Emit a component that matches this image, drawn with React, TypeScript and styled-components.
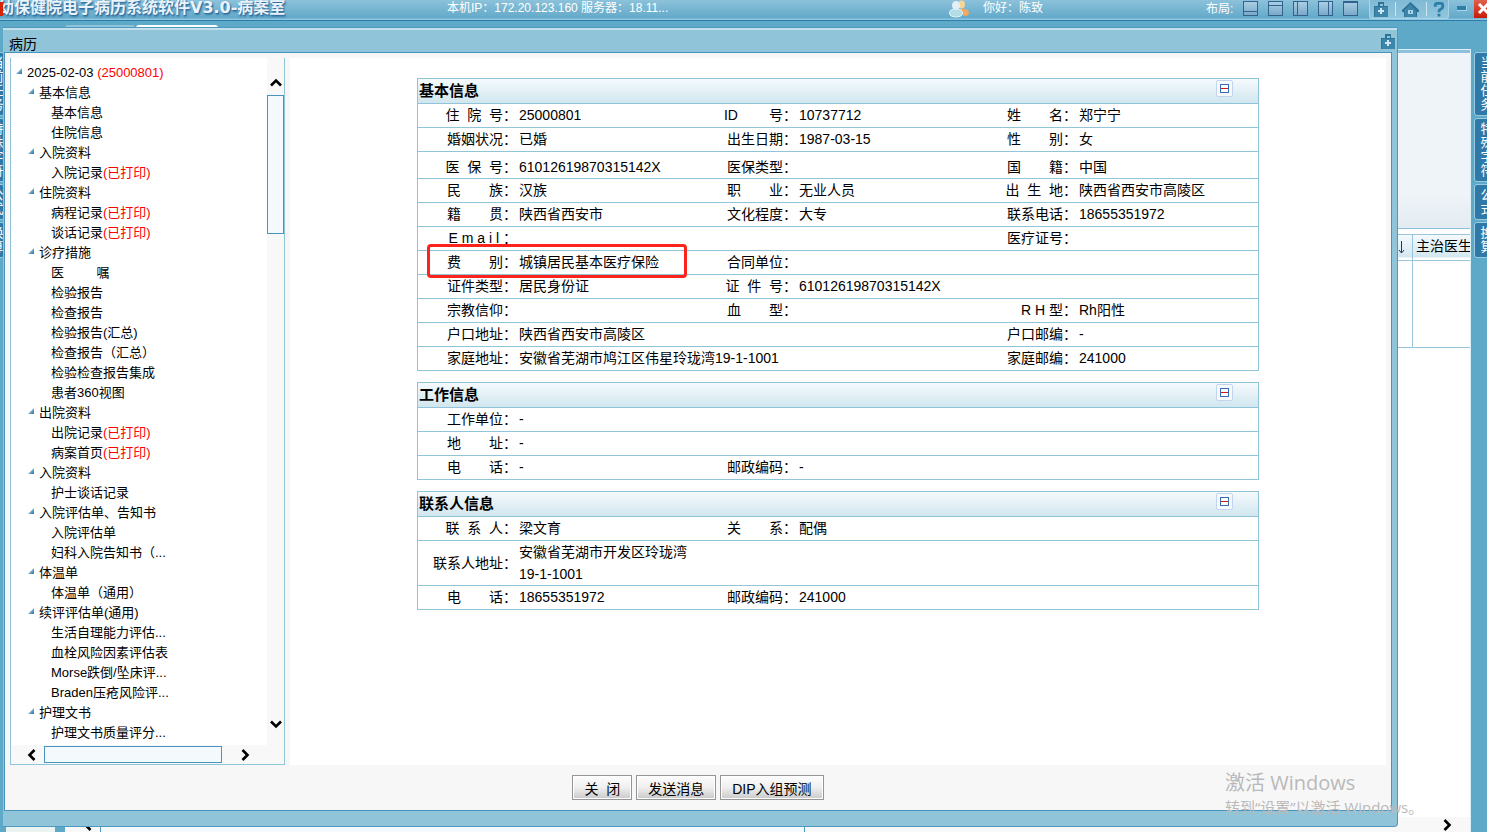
import React from "react";
import styled, { createGlobalStyle } from "styled-components";

const NB = "\u00a0";
const sp = (n: number) => NB.repeat(n);

const Global = createGlobalStyle`
  * { box-sizing: border-box; }
  html, body { margin: 0; padding: 0; overflow: hidden; }
  body, button { font-family: "Liberation Sans", "Noto Sans CJK SC", sans-serif; font-size: 14px; color: #000; }
  button { cursor: pointer; }
`;

const Desktop = styled.div`
  position: relative;
  display: flex;
  flex-direction: column;
  height: 100vh;
  overflow: hidden;
  background: #5ea8c8;
`;

/* ---------- application bar ---------- */

const TopBar = styled.header`
  position: relative;
  flex: none;
  display: flex;
  justify-content: space-between;
  height: 21px;
  border-bottom: 1px solid #2f7cab;
  background: linear-gradient(#8cc2da, #63a9c9 18px, #8cc6e0 19px);
  color: #fff;
  font-size: 12px;
  line-height: 16px;
`;

const ProductName = styled.h1`
  flex: none;
  width: 447px;
  margin: 0 0 0 -2px;
  font: bold 16px/16px "DejaVu Sans", "Noto Sans CJK SC", sans-serif;
  color: #eaf3fa;
  text-shadow: 1px 1px 1px #2f6c9c, 1px 2px 2px #3f7dab;
  white-space: nowrap;
`;

const RedMark = styled.span`
  position: absolute;
  left: 0;
  top: 2px;
  width: 3px;
  height: 14px;
  background: #d3260b;
`;

const HostInfo = styled.span`
  flex: 1;
  padding-left: 2px;
  font-size: 12px;
  white-space: nowrap;
`;

const UserBox = styled.div`
  display: flex;
  gap: 12px;
  width: 257px;
`;

const LayoutBox = styled.div`
  display: flex;
  gap: 10px;
  width: 163px;
  & > span { width: 27px; line-height: 18px; white-space: nowrap; }
`;

const BareButton = styled.button`
  display: flex;
  align-items: flex-start;
  flex: none;
  padding: 0;
  border: 0;
  background: none;
  line-height: 0;
`;

const ToolGroup = styled.div`
  display: flex;
  align-items: flex-start;
  justify-content: space-around;
  width: 80px;
  height: 19px;
  padding-top: 2px;
  border: solid #a9d3e6;
  border-width: 0 1px 1px;
  border-radius: 0 0 3px 3px;
  background: linear-gradient(#7fbad5, #90c6dd);
`;

const Divider = styled.span`
  width: 1px;
  height: 14px;
  background: #cbe6f2;
`;

const WindowBox = styled.div`
  display: flex;
  justify-content: space-between;
  width: 38px;
  padding-left: 8px;
`;

const MinButton = styled(BareButton)`
  align-items: center;
  height: 16px;
`;

const CloseButton = styled(BareButton)`
  width: 13px;
  height: 18px;
  overflow: hidden;
  background: linear-gradient(#e0604c, #c81c0a);
`;

/* ---------- workspace behind the window ---------- */

const Workspace = styled.div`
  flex: 1;
  display: flex;
  min-height: 0;
`;

const Rail = styled.nav<{ $side: "left" | "right" }>`
  flex: none;
  display: flex;
  flex-direction: column;
  align-items: ${(p) => (p.$side === "left" ? "flex-end" : "flex-start")};
  gap: 2px;
  width: ${(p) => (p.$side === "left" ? "6px" : "16px")};
  padding: 31px ${(p) => (p.$side === "left" ? "2px 0 0" : "0 0 3px")};
  overflow: hidden;
`;

const RailTab = styled.button<{ $side: "left" | "right" }>`
  flex: none;
  width: ${(p) => (p.$side === "left" ? "20px" : "26px")};
  padding: 3px ${(p) => (p.$side === "left" ? "0 3px 5px" : "5px")};
  border: 1px solid #9ccbe0;
  border-right-width: ${(p) => (p.$side === "left" ? "0" : "1px")};
  border-radius: 3px;
  background: #2f79a8;
  color: #fff;
  font-size: 13px;
  line-height: 14px;
  word-break: break-all;
`;

const BackPane = styled.div`
  flex: 1;
  display: flex;
  flex-direction: column;
  min-width: 0;
`;

const BackTabs = styled.div`
  flex: none;
  display: flex;
  gap: 1px;
  height: 28px;
  padding: 4px 0 0 59px;
`;

const BackTab = styled.span<{ $active?: boolean }>`
  width: ${(p) => (p.$active ? "82px" : "70px")};
  height: 10px;
  border-top: 2px solid ${(p) => (p.$active ? "#fff" : "#8fc4d9")};
  border-radius: 3px;
`;

const BackPage = styled.div`
  flex: 1;
  display: flex;
  flex-direction: column;
  align-items: stretch;
  border-top: 1px solid #dceef6;
  border-right: 1px solid #dceef6;
  background: #fff;
`;

const BackForm = styled.div`
  flex: none;
  height: 179px;
  border-top: 3px solid #8cc0dd;
  border-bottom: 1px solid #8cc0dd;
  background: linear-gradient(#eff4f8 80%, #e3ecf2);
`;

const BackGrid = styled.div`
  display: flex;
  flex: none;
  justify-content: flex-end;
  height: 114px;
  margin-top: 5px;
  border: solid #9ac5dc;
  border-width: 1px 0;
`;

const BackColumn = styled.div<{ $wide?: boolean }>`
  width: ${(p) => (p.$wide ? "58px" : "20px")};
  border-left: ${(p) => (p.$wide ? "1px solid #9ac5dc" : "0")};
  overflow: hidden;
`;

const BackHead = styled.div`
  display: flex;
  height: 26px;
  padding-left: 3px;
  border-bottom: 1px solid #9ac5dc;
  background: linear-gradient(#f5fafc, #d3e7f0 22px, #fff 23px);
  line-height: 23px;
  white-space: nowrap;
  svg { flex: none; margin: 6px 0 0 3px; }
`;

const BackFooter = styled.div`
  flex: none;
  display: flex;
  height: 15px;
  margin-top: auto;
  padding-right: 16px;
  background: #f8f8f8;
`;

const BackStrip = styled.div<{ $kind: "tree" | "gap" | "arrow" | "track" | "rest" }>`
  flex: ${(p) => (p.$kind === "rest" ? "1" : "none")};
  display: flex;
  align-items: flex-end;
  justify-content: flex-end;
  width: ${(p) => ({ tree: "49px", gap: "10px", arrow: "36px", track: "704px", rest: "auto" })[p.$kind]};
  border-right: ${(p) => (p.$kind === "arrow" || p.$kind === "track" ? "1px solid #4f99be" : "0")};
  padding-right: ${(p) => (p.$kind === "arrow" ? "5px" : "0")};
  background: ${(p) => ({ tree: "#eaf2f2", gap: "#5ea8c8", arrow: "#f8f8f8", track: "#f3f9fc", rest: "#f8f8f8" })[p.$kind]};
`;

/* ---------- record window ---------- */

const Window = styled.section`
  position: absolute;
  inset: 27px 89px 5px 3px;
  display: flex;
  flex-direction: column;
  padding: 0 5px 15px 0;
  border: solid #4f99be;
  border-width: 1px 1px 1px 0;
  border-radius: 0 2px 4px 0;
  background: #90c4d9;
`;

const WindowTitle = styled.div`
  flex: none;
  display: flex;
  justify-content: space-between;
  height: 24px;
  margin-right: -5px;
  padding: 4px 1px 0 6px;
  border-top: 2px solid #c5e0ed;
  h2 { margin: 0; font-size: 14px; font-weight: normal; line-height: 20px; }
`;

const WindowBody = styled.div`
  flex: 1;
  display: flex;
  flex-direction: column;
  min-height: 0;
  margin-left: 1px;
  padding: 5px 5px 0;
  border: 1px solid #4795be;
  background: #f7f7f7;
`;

const Columns = styled.div`
  flex: 1;
  display: flex;
  gap: 5px;
  min-height: 0;
`;

/* ---------- tree ---------- */

const TreePanel = styled.aside`
  flex: none;
  display: flex;
  flex-direction: column;
  width: 275px;
  border: solid #90c4d9;
  border-width: 0 1px 1px;
  background: #f8f8f8;
`;

const TreeTop = styled.div`
  flex: 1;
  display: flex;
  min-height: 0;
`;

const TreeList = styled.ul`
  flex: 1;
  margin: 0;
  padding: 5px 0 0;
  overflow: hidden;
  list-style: none;
  background: #fff;
  font-size: 13px;
`;

const TreeRow = styled.li<{ $level: number }>`
  display: flex;
  height: 20px;
  padding-left: ${(p) => 4 + p.$level * 12}px;
  line-height: 20px;
  white-space: nowrap;
  svg { flex: none; margin: 5px 5px 0 1px; }
`;

const TreeLink = styled.a<{ $leaf: boolean }>`
  margin-left: ${(p) => (p.$leaf ? "12px" : "0")};
  color: #000;
  text-decoration: none;
  em { color: #f00; font-style: normal; }
`;

const VScroll = styled.div`
  flex: none;
  display: flex;
  flex-direction: column;
  justify-content: space-between;
  width: 17px;
  margin-top: 4px;
`;

const VStart = styled.div`
  display: flex;
  flex-direction: column;
`;

const ScrollButton = styled(BareButton)<{ $dir: "v" | "h" }>`
  align-items: center;
  justify-content: center;
  width: ${(p) => (p.$dir === "v" ? "17px" : "24px")};
  height: ${(p) => (p.$dir === "v" ? "43px" : "18px")};
`;

const VUp = styled(ScrollButton)`
  height: 33px;
  padding-top: 9px;
`;

const VThumb = styled.div`
  height: 139px;
  border: 1px solid #4795be;
  background: #f3f9fd;
`;

const HScroll = styled.div`
  flex: none;
  display: flex;
  height: 18px;
  padding-left: 9px;
  margin-top: 1px;
`;

const HThumb = styled.div`
  width: 178px;
  height: 17px;
  margin-right: 11px;
  border: 1px solid #4795be;
  background: #f3f9fd;
`;

/* ---------- detail sections ---------- */

const Detail = styled.main`
  flex: 1;
  display: flex;
  flex-direction: column;
  align-items: center;
  gap: 11px;
  min-width: 0;
  padding-top: 20px;
  background: #fff;
`;

const Card = styled.section`
  width: 100%;
  max-width: 842px;
  border: solid #90c4d9;
  border-width: 1px 1px 0;
`;

const CardHead = styled.div`
  display: flex;
  justify-content: space-between;
  height: 25px;
  padding: 1px 25px 0 1px;
  border-bottom: 1px solid #90c4d9;
  background: linear-gradient(#f5fafc, #d1e6ef);
  h3 { margin: 0; font-size: 15px; line-height: 22px; }
`;

const FoldButton = styled(BareButton)`
  align-items: center;
  justify-content: center;
  width: 17px;
  height: 17px;
  border: 1px solid #c3d5ee;
  border-radius: 2px;
  background: #f6f9fc;
`;

const Grid = styled.table`
  width: 100%;
  table-layout: fixed;
  border-collapse: separate;
  border-spacing: 0;
`;

const LabelCol = styled.col`
  width: 100px;
`;

type RowKind = "single" | "tall" | "double";

const Row = styled.tr<{ $kind: RowKind }>`
  height: ${(p) => (p.$kind === "tall" ? "27px" : "24px")};
  & > * { vertical-align: ${(p) => ({ single: "top", tall: "bottom", double: "middle" })[p.$kind]}; }
`;

const Label = styled.th`
  position: relative;
  padding: 0 1px 0 0;
  border-bottom: 1px solid #90c4d9;
  font-weight: normal;
  line-height: 22px;
  text-align: right;
  white-space: nowrap;
`;

const Value = styled.td`
  padding: 0 0 0 1px;
  border-bottom: 1px solid #90c4d9;
  line-height: 22px;
`;

const Highlight = styled.span`
  position: absolute;
  z-index: 1;
  left: 9px;
  top: -7px;
  width: 260px;
  height: 34px;
  border: 3px solid #fb231b;
  border-radius: 4px;
  pointer-events: none;
`;

/* ---------- footer ---------- */

const Footer = styled.footer`
  flex: none;
  display: flex;
  align-items: center;
  justify-content: center;
  gap: 4px;
  height: 45px;
`;

const PushButton = styled.button`
  height: 25px;
  padding: 2px 11px 0;
  border: 1px solid #959595;
  background: linear-gradient(#fdfdfd, #efefef 50%, #c9c9c9);
  box-shadow: inset 0 0 0 1px #fff;
  line-height: 22px;
`;

const Watermark = styled.div`
  position: absolute;
  right: 0;
  bottom: 15px;
  width: 262px;
  color: #b9b9b9;
  font-family: "Open Sans", "Noto Sans CJK SC", sans-serif;
  pointer-events: none;
  p { margin: 0; white-space: nowrap; }
  p:first-child { font-size: 20px; line-height: 28px; }
  p:last-child { font-size: 15px; line-height: 20px; }
`;

/* ---------- drawings ---------- */

const Chevron = ({ turn }: { turn: number }) => (
  <svg width="14" height="14" viewBox="0 0 14 14">
    <path d="M2 9.500 7 4.500l5 5" transform={`rotate(${turn} 7 7)`} fill="none" stroke="#000" strokeWidth="2.600" />
  </svg>
);

const Expander = () => (
  <svg width="6" height="6" viewBox="0 0 6 6">
    <defs>
      <linearGradient id="exp" x1="0" y1="0" x2="1" y2="1">
        <stop offset="0.3" stopColor="#9cc6dc" />
        <stop offset="1" stopColor="#2574a3" />
      </linearGradient>
    </defs>
    <path d="M6 0v6H0z" fill="url(#exp)" />
  </svg>
);

const Kit = () => (
  <svg width="16" height="16" viewBox="0 0 16 16" shapeRendering="crispEdges">
    <path d="M5 0h6v4h4v11H1V4h4z" fill="#2d7396" />
    <path d="M7 2h3v2H7z" fill="#90c4d9" />
    <path d="M2 5h13v10H2z" fill="#3d86ab" />
    <path d="M7 6h2v2h2v2H9v2H7v-2H5V8h2z" fill="#cfe7f2" />
  </svg>
);

const Home = () => (
  <svg width="17" height="16" viewBox="0 0 17 16">
    <path d="M8.500 0 0 8v2h2v5h13v-5h2V8z" fill="#2d7396" />
    <path d="M8.500 2 2 8.500 3 10v5h11V9z" fill="#3d86ab" />
    <path d="M6 8h5v4H6z" fill="#a9d3e6" />
    <path d="M8 9h1v2H8z" fill="#3d86ab" />
  </svg>
);

const Help = () => (
  <svg width="12" height="15" viewBox="0 0 12 16">
    <path d="M2 5V3.500Q2 1.500 4 1.500h4q2 0 2 2V5q0 1.500-2 2.500T6 10v1" fill="none" stroke="#2d7da6" strokeWidth="3" />
    <path d="M4.500 12.500h3v3h-3z" fill="#2d7da6" />
  </svg>
);

const Users = () => (
  <svg width="22" height="18" viewBox="0 0 22 18">
    <ellipse cx="12.500" cy="4.500" rx="3.500" ry="4" fill="#f4d59a" />
    <path d="M10 9q10-1 10 4 0 3-5 3z" fill="#f3a860" />
    <ellipse cx="7" cy="5.500" rx="4" ry="4.500" fill="#e3eff4" />
    <path d="M.5 13q0-4 6.500-4t6.500 4-6.500 4-6.500-4z" fill="#b4dbe6" stroke="#e4f2f7" />
  </svg>
);

const PANES = ["M1 11.500h13", "M1 5.500h13", "M4.500 1v14", "M10.500 1v14", "M1 2.500h13"];

const Pane = ({ line }: { line: string }) => (
  <svg width="15" height="16" viewBox="0 0 15 16" shapeRendering="crispEdges">
    <defs>
      <linearGradient id="pane" x1="0" y1="0" x2="0" y2="1">
        <stop offset="0" stopColor="#aad0e4" />
        <stop offset="1" stopColor="#79a7c8" />
      </linearGradient>
    </defs>
    <rect x="0.500" y="1.500" width="14" height="14" fill="url(#pane)" stroke="#33628c" />
    <path d={line} stroke="#33628c" />
  </svg>
);

const Minus = () => (
  <svg width="9" height="9" viewBox="0 0 9 9">
    <path d="M0 0h9v9H0z" fill="#3a6cb0" />
    <path d="M1 1h7v7H1z" fill="#fff" />
    <path d="M1 4h7v1H1z" fill="#d01818" />
  </svg>
);

const SortArrow = () => (
  <svg width="7" height="13" viewBox="0 0 7 13">
    <path d="M3.500 0v12M1 9l2.500 3L6 9" fill="none" stroke="#1d3c5c" />
  </svg>
);

/* ---------- data ---------- */

const printed = "(已打印)";
type Node = [level: number, text: string, mark?: string];

const NODES: Node[] = [
  [0, "2025-02-03 ", "(25000801)"],
  [1, "基本信息"],
  [2, "基本信息"],
  [2, "住院信息"],
  [1, "入院资料"],
  [2, "入院记录", printed],
  [1, "住院资料"],
  [2, "病程记录", printed],
  [2, "谈话记录", printed],
  [1, "诊疗措施"],
  [2, `医${sp(9)}嘱`],
  [2, "检验报告"],
  [2, "检查报告"],
  [2, "检验报告(汇总)"],
  [2, "检查报告（汇总）"],
  [2, "检验检查报告集成"],
  [2, "患者360视图"],
  [1, "出院资料"],
  [2, "出院记录", printed],
  [2, "病案首页", printed],
  [1, "入院资料"],
  [2, "护士谈话记录"],
  [1, "入院评估单、告知书"],
  [2, "入院评估单"],
  [2, "妇科入院告知书（..."],
  [1, "体温单"],
  [2, "体温单（通用）"],
  [1, "续评评估单(通用)"],
  [2, "生活自理能力评估..."],
  [2, "血栓风险因素评估表"],
  [2, "Morse跌倒/坠床评..."],
  [2, "Braden压疮风险评..."],
  [1, "护理文书"],
  [2, "护理文书质量评分..."],
];

const two = (a: string, b: string) => `${a}\u3000\u3000${b}：`;
const three = (s: string) => s.split("").join(sp(2)) + "：";

type Line = { cells: string[][]; kind?: RowKind; marked?: boolean };

const BASIC: Line[] = [
  { cells: [[three("住院号"), "25000801"], [`ID${sp(8)}号：`, "10737712"], [two("姓", "名"), "郑宁宁"]] },
  { cells: [["婚姻状况：", "已婚"], ["出生日期：", "1987-03-15"], [two("性", "别"), "女"]] },
  { kind: "tall", cells: [[three("医保号"), "61012619870315142X"], ["医保类型：", ""], [two("国", "籍"), "中国"]] },
  { cells: [[two("民", "族"), "汉族"], [two("职", "业"), "无业人员"], [three("出生地"), "陕西省西安市高陵区"]] },
  { cells: [[two("籍", "贯"), "陕西省西安市"], ["文化程度：", "大专"], ["联系电话：", "18655351972"]] },
  { cells: [[`E${NB}m${NB}a${NB}i${NB}l${NB}：`, ""], ["", ""], ["医疗证号：", ""]] },
  { marked: true, cells: [[two("费", "别"), "城镇居民基本医疗保险"], ["合同单位：", ""], ["", ""]] },
  { cells: [["证件类型：", "居民身份证"], [three("证件号"), "61012619870315142X"], ["", ""]] },
  { cells: [["宗教信仰：", ""], [two("血", "型"), ""], [`R${NB}H${NB}型：`, "Rh阳性"]] },
  { cells: [["户口地址：", "陕西省西安市高陵区"], ["户口邮编：", "-"]] },
  { cells: [["家庭地址：", "安徽省芜湖市鸠江区伟星玲珑湾19-1-1001"], ["家庭邮编：", "241000"]] },
];

const WORK: Line[] = [
  { cells: [["工作单位：", "-"], ["", ""], ["", ""]] },
  { cells: [[two("地", "址"), "-"], ["", ""], ["", ""]] },
  { cells: [[two("电", "话"), "-"], ["邮政编码：", "-"], ["", ""]] },
];

const CONTACT: Line[] = [
  { cells: [[three("联系人"), "梁文育"], [two("关", "系"), "配偶"], ["", ""]] },
  { kind: "double", cells: [["联系人地址：", "安徽省芜湖市开发区玲珑湾19-1-1001"], ["", ""], ["", ""]] },
  { cells: [[two("电", "话"), "18655351972"], ["邮政编码：", "241000"], ["", ""]] },
];

const Section = ({ title, lines }: { title: string; lines: Line[] }) => (
  <Card>
    <CardHead>
      <h3>{title}</h3>
      <FoldButton aria-label={`收起${title}`}><Minus /></FoldButton>
    </CardHead>
    <Grid>
      <colgroup>
        <LabelCol /><col /><LabelCol /><col /><LabelCol /><col />
      </colgroup>
      <tbody>
        {lines.map((line, r) => (
          <Row key={r} $kind={line.kind ?? "single"}>
            {line.cells.map(([label, value], c) => (
              <React.Fragment key={c}>
                <Label scope="row">
                  {label}
                  {line.marked && c === 0 && <Highlight />}
                </Label>
                <Value colSpan={line.cells.length === 2 && c === 0 ? 3 : 1}>{value}</Value>
              </React.Fragment>
            ))}
          </Row>
        ))}
      </tbody>
    </Grid>
  </Card>
);

const RAIL = ["当前任务", "特殊字符", "公式", "换算"];

const SideRail = ({ side }: { side: "left" | "right" }) => (
  <Rail $side={side}>
    {RAIL.map((t) => <RailTab key={t} $side={side}>{t}</RailTab>)}
  </Rail>
);

export default function App() {
  return (
    <Desktop>
      <Global />
      <TopBar>
        <RedMark />
        <ProductName>幼保健院电子病历系统软件V3.0-病案室</ProductName>
        <HostInfo>本机IP：172.20.123.160 服务器：18.11...</HostInfo>
        <UserBox>
          <Users />
          <span>你好：陈致</span>
        </UserBox>
        <LayoutBox>
          <span>布局:</span>
          {PANES.map((p, i) => (
            <BareButton key={i} aria-label={`布局${i + 1}`}><Pane line={p} /></BareButton>
          ))}
        </LayoutBox>
        <ToolGroup>
          <BareButton aria-label="工具箱"><Kit /></BareButton>
          <Divider />
          <BareButton aria-label="首页"><Home /></BareButton>
          <Divider />
          <BareButton aria-label="帮助"><Help /></BareButton>
        </ToolGroup>
        <WindowBox>
          <MinButton aria-label="最小化">
            <svg width="10" height="5" viewBox="0 0 10 5" shapeRendering="crispEdges">
              <path d="M0 0h10v5H0z" fill="#a9d3e6" />
              <path d="M0 0h9v4H0z" fill="#2d7fa6" />
            </svg>
          </MinButton>
          <CloseButton aria-label="关闭窗口">
            <svg width="13" height="18" viewBox="0 0 13 18">
              <path d="m5 4 9 9M14 4l-9 9" stroke="#fff" strokeWidth="3" />
            </svg>
          </CloseButton>
        </WindowBox>
      </TopBar>

      <Workspace>
        <SideRail side="left" />
        <BackPane>
          <BackTabs>
            <BackTab />
            <BackTab $active />
          </BackTabs>
          <BackPage>
            <BackForm />
            <BackGrid>
              <BackColumn><BackHead><SortArrow /></BackHead></BackColumn>
              <BackColumn $wide><BackHead>主治医生</BackHead></BackColumn>
            </BackGrid>
            <BackFooter>
              <BackStrip $kind="tree" />
              <BackStrip $kind="gap" />
              <BackStrip $kind="arrow"><Chevron turn={-90} /></BackStrip>
              <BackStrip $kind="track" />
              <BackStrip $kind="rest"><Chevron turn={90} /></BackStrip>
            </BackFooter>
          </BackPage>
        </BackPane>
        <SideRail side="right" />
      </Workspace>

      <Window aria-label="病历">
        <WindowTitle>
          <h2>病历</h2>
          <BareButton aria-label="工具箱"><Kit /></BareButton>
        </WindowTitle>
        <WindowBody>
          <Columns>
            <TreePanel>
              <TreeTop>
                <TreeList>
                  {NODES.map(([level, text, mark], i) => (
                    <TreeRow key={i} $level={level}>
                      {level < 2 && <Expander />}
                      <TreeLink href="#" $leaf={level === 2}>
                        {text}{mark && <em>{mark}</em>}
                      </TreeLink>
                    </TreeRow>
                  ))}
                </TreeList>
                <VScroll>
                  <VStart>
                    <VUp $dir="v" aria-label="向上"><Chevron turn={0} /></VUp>
                    <VThumb />
                  </VStart>
                  <ScrollButton $dir="v" aria-label="向下"><Chevron turn={180} /></ScrollButton>
                </VScroll>
              </TreeTop>
              <HScroll>
                <ScrollButton $dir="h" aria-label="向左"><Chevron turn={-90} /></ScrollButton>
                <HThumb />
                <ScrollButton $dir="h" aria-label="向右"><Chevron turn={90} /></ScrollButton>
              </HScroll>
            </TreePanel>
            <Detail>
              <Section title="基本信息" lines={BASIC} />
              <Section title="工作信息" lines={WORK} />
              <Section title="联系人信息" lines={CONTACT} />
            </Detail>
          </Columns>
          <Footer>
            <PushButton>关{sp(2)}闭</PushButton>
            <PushButton>发送消息</PushButton>
            <PushButton>DIP入组预测</PushButton>
          </Footer>
        </WindowBody>
      </Window>

      <Watermark>
        <p>激活 Windows</p>
        <p>转到“设置”以激活 Windows。</p>
      </Watermark>
    </Desktop>
  );
}
